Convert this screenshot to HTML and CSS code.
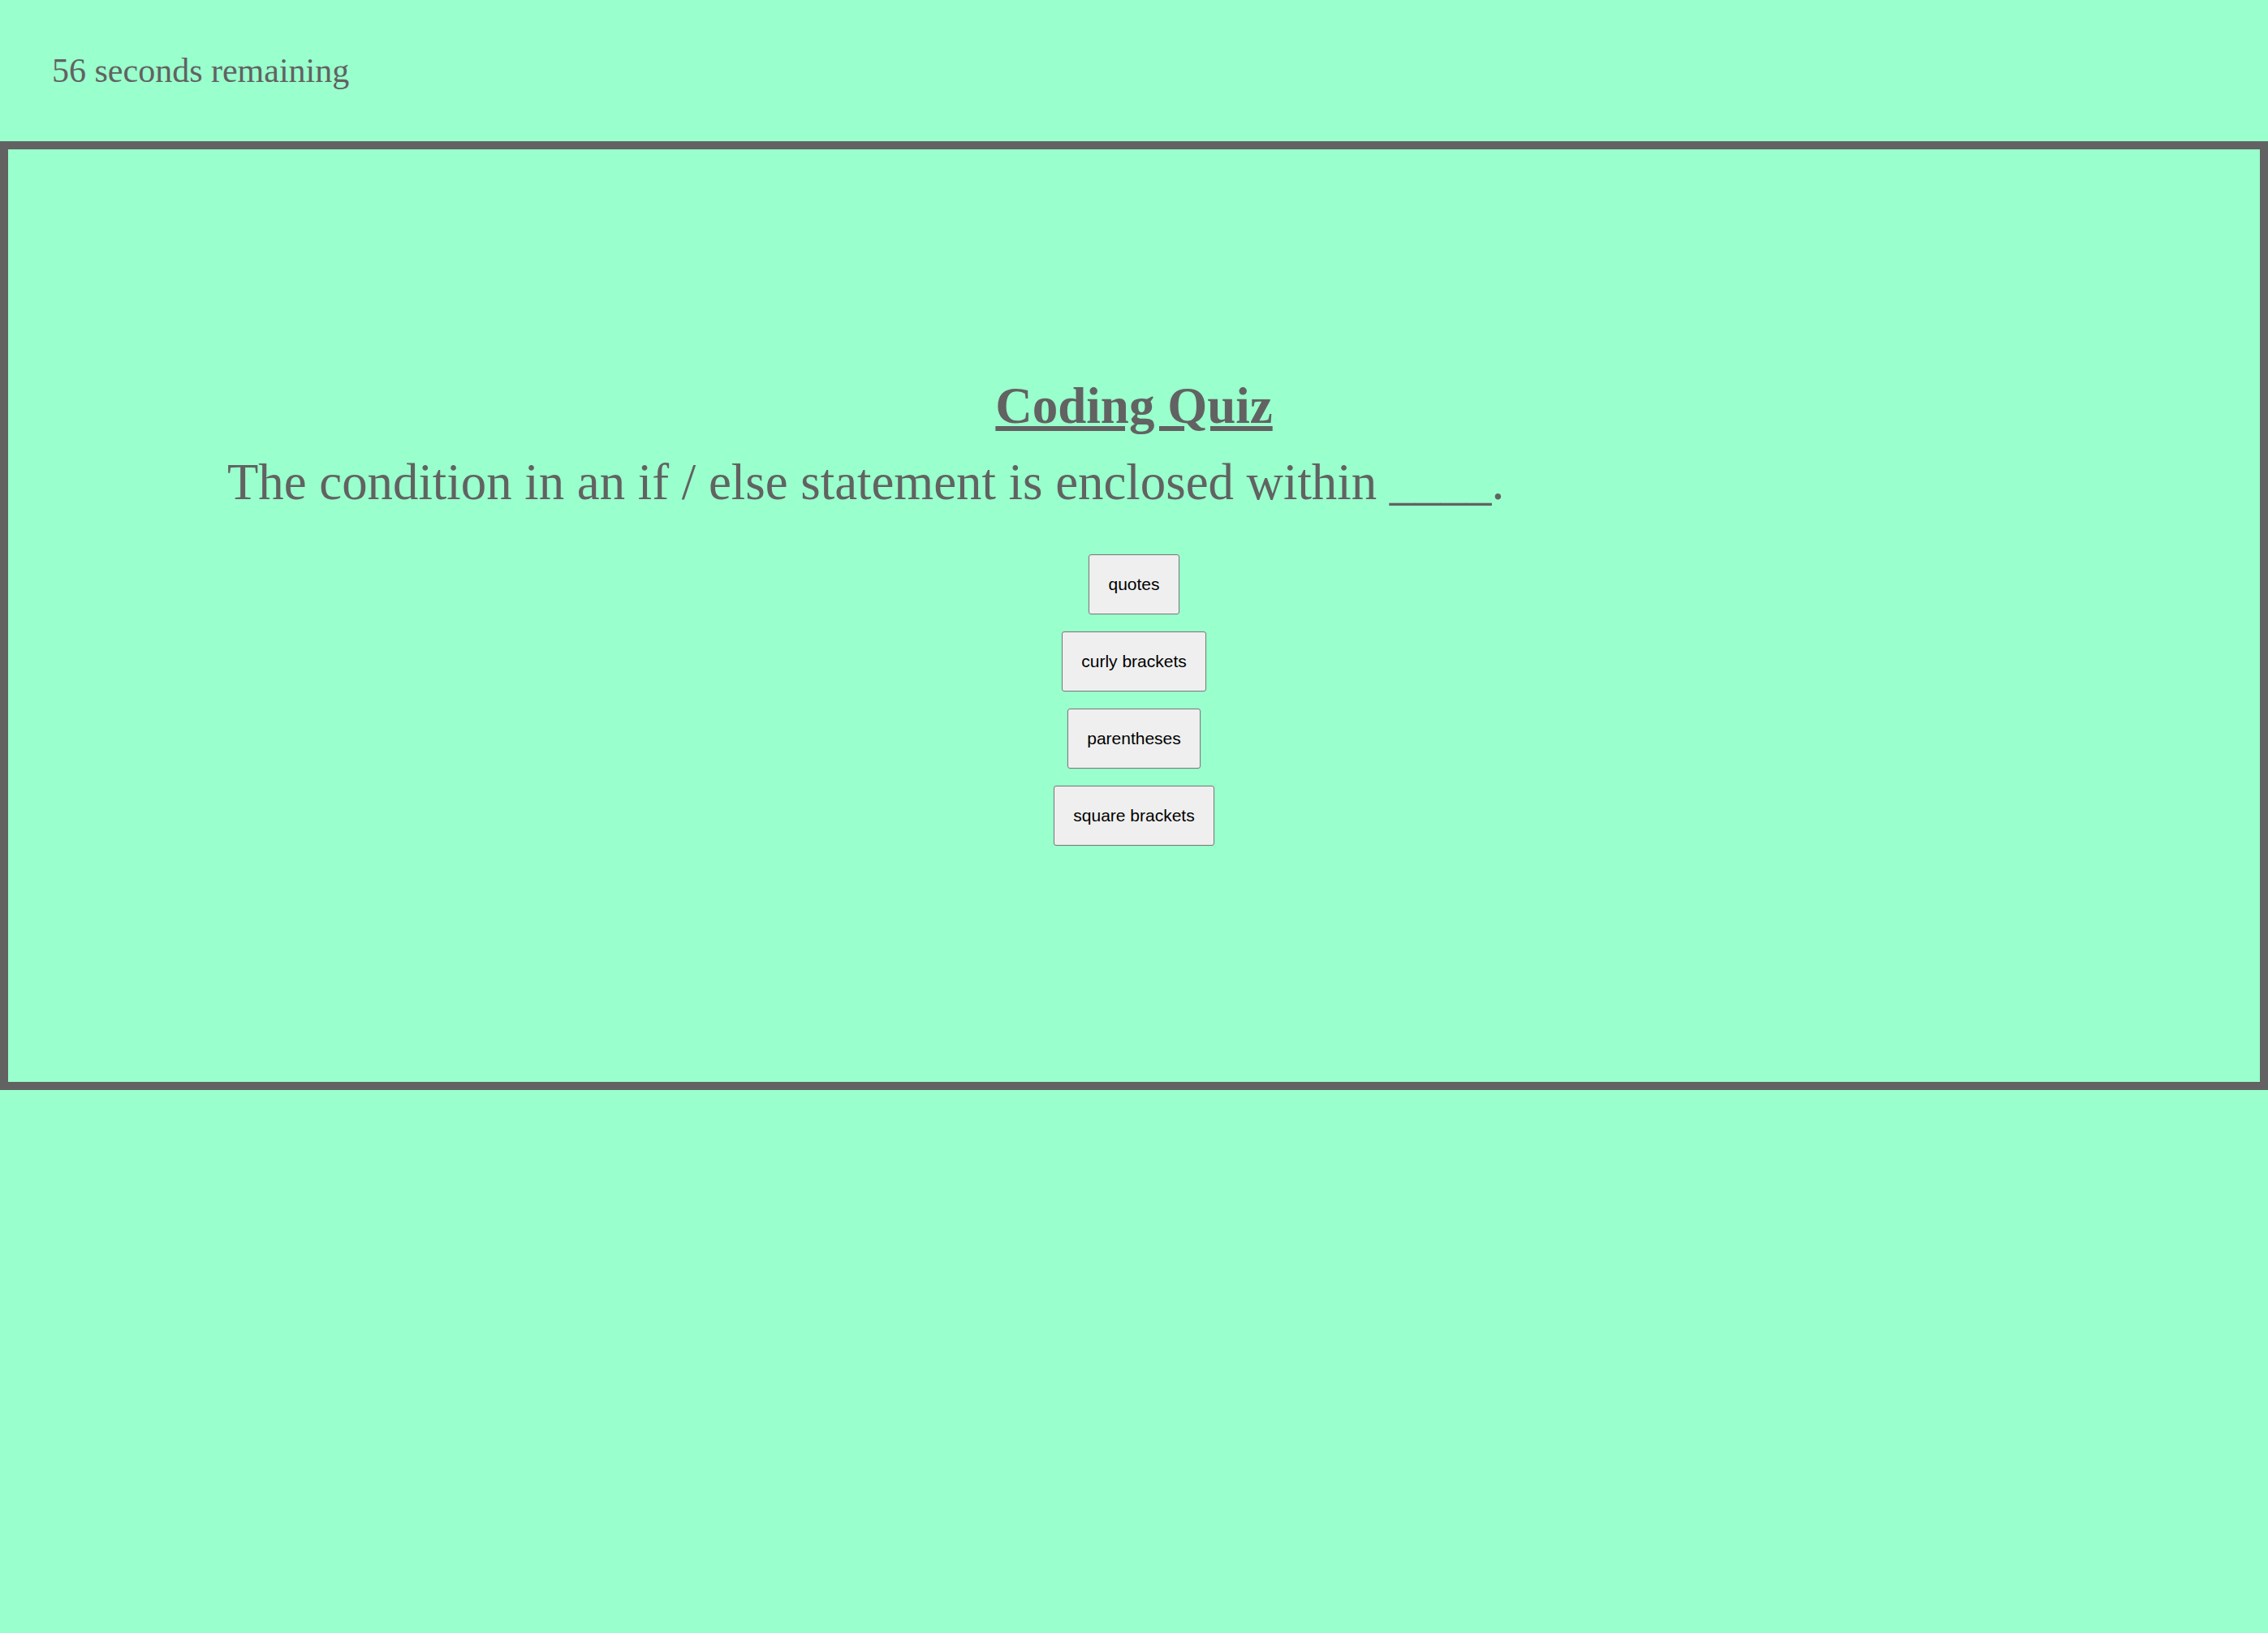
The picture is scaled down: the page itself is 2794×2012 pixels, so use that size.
FILE: index.html
```html
<!DOCTYPE html>
<html>
<head>
<meta charset="utf-8">
<link rel="stylesheet" href="styles.css">
<title>Coding Quiz</title>
</head>
<body>
<header class="top">
  <p class="timer">56 seconds remaining</p>
</header>
<main class="quiz">
  <h1 class="title">Coding Quiz</h1>
  <p class="question">The condition in an if / else statement is enclosed within ____.</p>
  <div class="choices">
    <button class="choice">quotes</button>
    <button class="choice">curly brackets</button>
    <button class="choice">parentheses</button>
    <button class="choice">square brackets</button>
  </div>
</main>
</body>
</html>
```
FILE: styles.css
```css
html, body {
  margin: 0;
  padding: 0;
  background: #99ffcc;
  color: #626262;
  font-family: "Liberation Serif", "Times New Roman", serif;
}
.top {
  height: 174px;
  box-sizing: border-box;
  padding: 64px 0 0 64px;
}
.timer {
  margin: 0;
  font-size: 42px;
  line-height: 47px;
}
.quiz {
  border: 10px solid #626262;
  height: 1169px;
  box-sizing: border-box;
  padding-top: 281px;
  display: flex;
  flex-direction: column;
}
.title {
  margin: 0;
  text-align: center;
  font-size: 63px;
  line-height: 70px;
  font-weight: bold;
  text-decoration: underline;
}
.question {
  margin: 24px 0 0 0;
  padding-left: 270px;
  font-size: 62.8px;
  line-height: 70px;
}
.choices {
  margin-top: 54px;
  display: flex;
  flex-direction: column;
  align-items: center;
  gap: 21px;
}
.choice {
  font-family: "Liberation Sans", Arial, sans-serif;
  font-size: 21px;
  line-height: 24px;
  color: #000;
  background: #efefef;
  border: 1px solid #767676;
  border-radius: 3px;
  padding: 24px 23.5px;
  margin: 0;
}
```
